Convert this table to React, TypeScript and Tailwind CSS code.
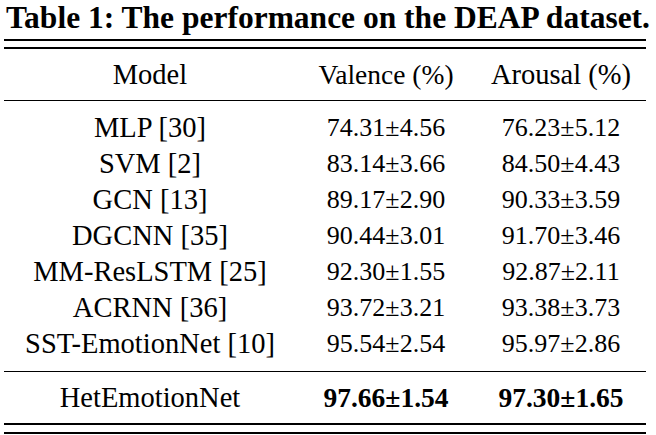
import React from "react";

const rows: [string, string, string][] = [
  ["MLP [30]", "74.31±4.56", "76.23±5.12"],
  ["SVM [2]", "83.14±3.66", "84.50±4.43"],
  ["GCN [13]", "89.17±2.90", "90.33±3.59"],
  ["DGCNN [35]", "90.44±3.01", "91.70±3.46"],
  ["MM-ResLSTM [25]", "92.30±1.55", "92.87±2.11"],
  ["ACRNN [36]", "93.72±3.21", "93.38±3.73"],
  ["SST-EmotionNet [10]", "95.54±2.54", "95.97±2.86"],
];

export default function App() {
  return (
    <div className="w-[656px] h-[435px] bg-white text-black [font-family:'Liberation_Serif',serif] overflow-hidden">
      <div className="h-[39px] pl-[6px] text-[31.5px] font-bold leading-[36px] whitespace-nowrap">
        Table 1: The performance on the DEAP dataset.
      </div>
      <div className="ml-[4px] w-[642px]">
        <div className="h-[2px] bg-black" />
        <div className="h-[6px]" />
        <div className="h-[2px] bg-black" />
        <div className="grid grid-cols-[292px_180px_170px] h-[51px] items-center text-[28.5px] leading-[36px] text-center">
          <div>Model</div>
          <div className="text-[27.5px]">Valence (%)</div>
          <div>Arousal (%)</div>
        </div>
        <div className="h-px bg-black" />
        <div className="py-[9px] leading-[36px] text-center">
          {rows.map((r) => (
            <div key={r[0]} className="grid grid-cols-[292px_180px_170px] h-[36px] items-center">
              <div className="text-[28.5px]">{r[0]}</div>
              <div className="text-[26px]">{r[1]}</div>
              <div className="text-[26px]">{r[2]}</div>
            </div>
          ))}
        </div>
        <div className="h-px bg-black" />
        <div className="grid grid-cols-[292px_180px_170px] h-[51px] items-center leading-[36px] text-center">
          <div className="text-[28.5px]">HetEmotionNet</div>
          <div className="text-[27.5px] font-bold">97.66±1.54</div>
          <div className="text-[27.5px] font-bold">97.30±1.65</div>
        </div>
        <div className="h-[2px] bg-black" />
        <div className="h-[7px]" />
        <div className="h-[2px] bg-black" />
      </div>
    </div>
  );
}
